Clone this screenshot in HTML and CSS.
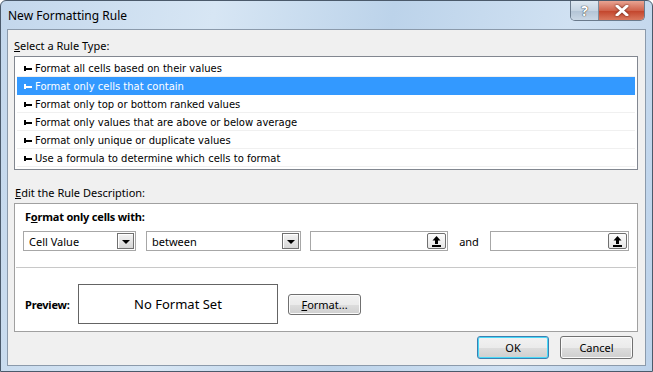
FILE: index.html
```html
<!DOCTYPE html>
<html lang="en">
  <head>
    <meta charset="UTF-8" />
    <title>New Formatting Rule</title>
    <link rel="stylesheet" href="styles.css">
  </head>
  <body>
    <div class="window">
      <div class="titlebar">
        <span class="title">New Formatting Rule</span>
        <div class="controls">
          <div class="ctl help">?</div>
          <div class="ctl close">
            <svg width="14" height="11" viewBox="0 0 14 11">
              <path d="M2 1 L12 10 M12 1 L2 10" stroke="#fff" stroke-width="3" stroke-linecap="round" />
            </svg>
          </div>
        </div>
      </div>

      <div class="client">
        <div class="label"><u>S</u>elect a Rule Type:</div>
        <ul class="rules">
          <li><i class="tick"></i>Format all cells based on their values</li>
          <li class="selected"><i class="tick"></i>Format only cells that contain</li>
          <li><i class="tick"></i>Format only top or bottom ranked values</li>
          <li><i class="tick"></i>Format only values that are above or below average</li>
          <li><i class="tick"></i>Format only unique or duplicate values</li>
          <li><i class="tick"></i>Use a formula to determine which cells to format</li>
        </ul>

        <div class="label edit"><u>E</u>dit the Rule Description:</div>
        <div class="desc">
          <div class="desc-title">F<u>o</u>rmat only cells with:</div>
          <div class="cond">
            <div class="combo w1"><span>Cell Value</span><i class="drop"></i></div>
            <div class="combo w2"><span>between</span><i class="drop"></i></div>
            <div class="ref w3">
              <i class="pick">
                <svg width="11" height="12" viewBox="0 0 11 12">
                  <path d="M5.5 1 L9.5 5.5 H7 V9 H4 V5.5 H1.5 Z" fill="#000" />
                  <rect x="1" y="10" width="9" height="2" fill="#000" />
                </svg>
              </i>
            </div>
            <span class="and">and</span>
            <div class="ref w4">
              <i class="pick">
                <svg width="11" height="12" viewBox="0 0 11 12">
                  <path d="M5.5 1 L9.5 5.5 H7 V9 H4 V5.5 H1.5 Z" fill="#000" />
                  <rect x="1" y="10" width="9" height="2" fill="#000" />
                </svg>
              </i>
            </div>
          </div>
          <div class="sep"></div>
          <div class="preview-row">
            <span class="preview-label">Preview:</span>
            <div class="preview">No Format Set</div>
            <button class="btn fmt"><u>F</u>ormat...</button>
          </div>
        </div>

        <div class="actions">
          <button class="btn ok">OK</button>
          <button class="btn">Cancel</button>
        </div>
      </div>
    </div>
  </body>
</html>
```

FILE: styles.css
```css
* {
  box-sizing: border-box;
}
body {
  margin: 0;
  font-family: "Noto Sans", "DejaVu Sans", sans-serif;
  font-size: 11px;
  color: #000;
  background: #fff;
}
.window {
  width: 653px;
  height: 372px;
  border: 1px solid #4b5a6b;
  border-radius: 6px 6px 0 0;
  background: linear-gradient(100deg, #c3d7ec 0%, #d7e6f4 30%, #bcd3ea 55%, #d0e1f2 80%, #bcd2ea 100%);
  display: flex;
  flex-direction: column;
}
.titlebar {
  height: 28px;
  display: flex;
  align-items: flex-start;
  padding-left: 7px;
}
.title {
  margin-top: 6px;
  font-size: 12px;
}
.controls {
  margin-left: auto;
  margin-right: 7px;
  display: flex;
  border: 1px solid #6a7a8c;
  border-top: none;
  border-radius: 0 0 5px 5px;
  overflow: hidden;
}
.ctl {
  height: 19px;
  display: flex;
  align-items: center;
  justify-content: center;
}
.help {
  width: 28px;
  background: linear-gradient(#dde7f1, #c6d4e2 50%, #b2c3d5 51%, #c9d7e5);
  border-right: 1px solid #7d8b9a;
  color: #fff;
  font-weight: bold;
  font-size: 14px;
  text-shadow: 0 0 1px #333, 0 0 1px #333;
}
.close {
  width: 45px;
  background: linear-gradient(#e8a493, #d0634c 50%, #c2432a 51%, #d9785e);
}
.close svg {
  filter: drop-shadow(0 0 1px #5a1a10);
}
.client {
  margin: 0 6px;
  height: 337px;
  border: 1px solid #8b9aab;
  background: #f0f0f0;
  padding: 8px 7px 0 6px;
}
.label {
  height: 16px;
  line-height: 16px;
}
.rules {
  list-style: none;
  margin: 2px 0 0;
  padding: 2px;
  height: 114px;
  border: 1px solid #828790;
  background: #fff;
  font-family: "DejaVu Sans", sans-serif;
  font-size: 10px;
}
.rules li {
  height: 18px;
  border-bottom: 1px solid #f0f0f0;
  padding: 2px 0 0 7px;
  display: flex;
  align-items: center;
  white-space: nowrap;
}
.rules li.selected {
  background: #3399ff;
  color: #fff;
  border-bottom-color: #3399ff;
}
.tick {
  width: 8px;
  height: 5px;
  margin-right: 3px;
  background:
    linear-gradient(currentColor, currentColor) 0 0 / 2px 5px no-repeat,
    linear-gradient(currentColor, currentColor) 0 2px / 8px 2px no-repeat;
}
.edit {
  margin-top: 15px;
  padding-left: 1px;
}
.desc {
  margin-top: 2px;
  height: 129px;
  border: 1px solid #a0a0a0;
  background: #fff;
  padding: 5px 1px 0;
}
.desc-title {
  font-weight: bold;
  height: 16px;
  line-height: 16px;
  padding-left: 9px;
  letter-spacing: -0.2px;
}
.cond {
  display: flex;
  align-items: center;
  margin-top: 6px;
  padding-left: 7px;
  height: 20px;
}
.combo, .ref {
  height: 20px;
  border: 1px solid #a7a7a7;
  background: #fff;
  display: flex;
  align-items: center;
  justify-content: space-between;
  padding: 1px;
}
.combo span {
  padding-left: 4px;
}
.w1 { width: 113px; }
.w2 { width: 155px; margin-left: 10px; }
.w3 { width: 138px; margin-left: 9px; justify-content: flex-end; }
.w4 { width: 139px; justify-content: flex-end; }
.and {
  width: 42px;
  text-align: center;
}
.drop {
  width: 17px;
  height: 16px;
  border: 1px solid #707070;
  background: linear-gradient(#f4f4f4, #d6d6d6);
  box-shadow: inset 1px 1px 0 #fff;
  display: flex;
  align-items: center;
  justify-content: center;
}
.drop::after {
  content: "";
  margin-top: 2px;
  border-top: 4px solid #000;
  border-left: 4px solid transparent;
  border-right: 4px solid transparent;
}
.pick {
  width: 19px;
  height: 16px;
  border: 1px solid #707070;
  border-radius: 2px;
  background: linear-gradient(#fdfdfd, #e6e6e6);
  display: flex;
  align-items: center;
  justify-content: center;
}
.sep {
  margin-top: 16px;
  height: 1px;
  background: #c8c8c8;
}
.preview-row {
  margin-top: 16px;
  display: flex;
  align-items: center;
  padding-left: 9px;
}
.preview-label {
  font-weight: bold;
  width: 53px;
  letter-spacing: -0.2px;
}
.preview {
  width: 200px;
  height: 40px;
  border: 1px solid #646464;
  display: flex;
  align-items: center;
  justify-content: center;
  font-size: 13px;
}
.btn {
  font-family: "Noto Sans", "DejaVu Sans", sans-serif;
  font-size: 11px;
  color: #000;
  height: 23px;
  width: 73px;
  padding: 0;
  border: 1px solid #707070;
  border-radius: 3px;
  background: linear-gradient(#f2f2f2, #ebebeb 50%, #dddddd 51%, #cfcfcf);
  box-shadow: inset 0 0 0 1px #fbfbfb;
}
.fmt {
  height: 21px;
  margin-left: 10px;
}
.actions {
  display: flex;
  justify-content: flex-end;
  gap: 11px;
  margin-top: 4px;
  padding-right: 5px;
}
.ok {
  width: 72px;
  border-color: #3c7fb1;
  box-shadow: inset 0 0 0 1px #48d9f8;
}
```
